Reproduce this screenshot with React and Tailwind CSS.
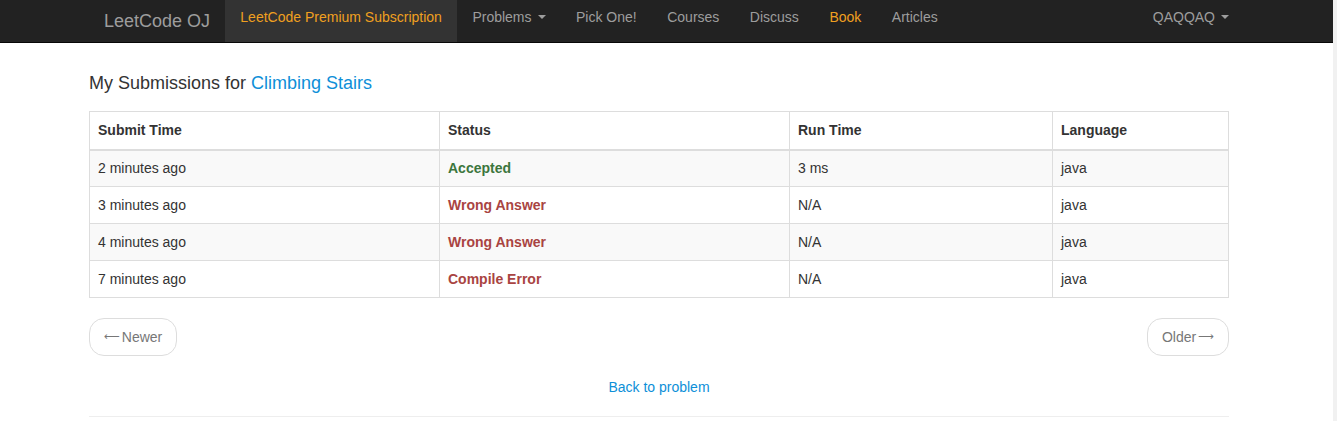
import React from 'react'

const NAV = [
  { label: 'LeetCode Premium Subscription', active: true },
  { label: 'Problems', caret: true },
  { label: 'Pick One!' },
  { label: 'Courses' },
  { label: 'Discuss' },
  { label: 'Book', orange: true },
  { label: 'Articles' },
]

const ROWS = [
  { t: '2 minutes ago', s: 'Accepted', ok: true, r: '3 ms', l: 'java' },
  { t: '3 minutes ago', s: 'Wrong Answer', r: 'N/A', l: 'java' },
  { t: '4 minutes ago', s: 'Wrong Answer', r: 'N/A', l: 'java' },
  { t: '7 minutes ago', s: 'Compile Error', r: 'N/A', l: 'java' },
]

function Caret(){
  return <span className="inline-block ml-[6px] align-middle w-0 h-0 border-x-[4px] border-x-transparent border-t-[4px] border-t-[#9d9d9d]"></span>
}

export default function App(){
  return (
    <div className="flex w-[1337px] h-[421px] overflow-hidden bg-white text-[14px] text-[#333]" style={{ fontFamily: '"Liberation Sans", Arial, sans-serif' }}>
      <div className="w-[1333px] shrink-0">
        {/* navbar */}
        <div className="h-[43px] bg-[#222] border-b border-[#080808]">
          <div className="w-[1140px] ml-[89px] flex items-stretch h-[42px]">
            <div className="px-[15px] flex items-center text-[18px] text-[#9d9d9d]">LeetCode OJ</div>
            <div className="flex">
              {NAV.map((n) => (
                <div key={n.label} className={"px-[15.25px] flex items-center pb-[8px] " + (n.active ? 'bg-[#333] text-[#f0a020]' : n.orange ? 'text-[#f0a020]' : 'text-[#9d9d9d]')}>
                  {n.label}{n.caret && <Caret />}
                </div>
              ))}
            </div>
            <div className="ml-auto flex items-center pb-[8px] text-[#9d9d9d]">QAQQAQ<Caret /></div>
          </div>
        </div>

        {/* content */}
        <div className="w-[1140px] ml-[89px]">
          <h3 className="mt-[28px] mb-[16px] text-[18px] leading-[24px]">
            My Submissions for <span className="text-[#0d8fd8]">Climbing Stairs</span>
          </h3>
          <table className="w-full border-collapse border border-[#ddd]">
            <thead>
              <tr className="h-[38px] border-b-2 border-[#ddd]">
                <th className="w-[350px] border border-[#ddd] px-[8px] text-left font-bold">Submit Time</th>
                <th className="w-[350px] border border-[#ddd] px-[8px] text-left font-bold">Status</th>
                <th className="w-[263px] border border-[#ddd] px-[8px] text-left font-bold">Run Time</th>
                <th className="border border-[#ddd] px-[8px] text-left font-bold">Language</th>
              </tr>
            </thead>
            <tbody>
              {ROWS.map((r, i) => (
                <tr key={i} className={"h-[37px] " + (i % 2 === 0 ? 'bg-[#f9f9f9]' : 'bg-white')}>
                  <td className="border border-[#ddd] px-[8px]">{r.t}</td>
                  <td className={"border border-[#ddd] px-[8px] font-bold " + (r.ok ? 'text-[#3c763d]' : 'text-[#a94442]')}>{r.s}</td>
                  <td className="border border-[#ddd] px-[8px]">{r.r}</td>
                  <td className="border border-[#ddd] px-[8px]">{r.l}</td>
                </tr>
              ))}
            </tbody>
          </table>

          <div className="flex justify-between mt-[20px]">
            <div className="h-[38px] px-[14px] flex items-center gap-[2px] border border-[#ddd] rounded-[15px] text-[#777]">
              <span style={{ fontFamily: '"DejaVu Sans", sans-serif' }} className="text-[11px]">⟵</span>Newer
            </div>
            <div className="h-[38px] px-[14px] flex items-center gap-[2px] border border-[#ddd] rounded-[15px] text-[#777]">
              Older<span style={{ fontFamily: '"DejaVu Sans", sans-serif' }} className="text-[11px]">⟶</span>
            </div>
          </div>

          <div className="text-center mt-[21px] text-[#0d8fd8]">Back to problem</div>
          <div className="mt-[18px] border-t border-[#eee]"></div>
        </div>
      </div>
      <div className="w-[4px] bg-[#f1f1f1]"></div>
    </div>
  )
}
